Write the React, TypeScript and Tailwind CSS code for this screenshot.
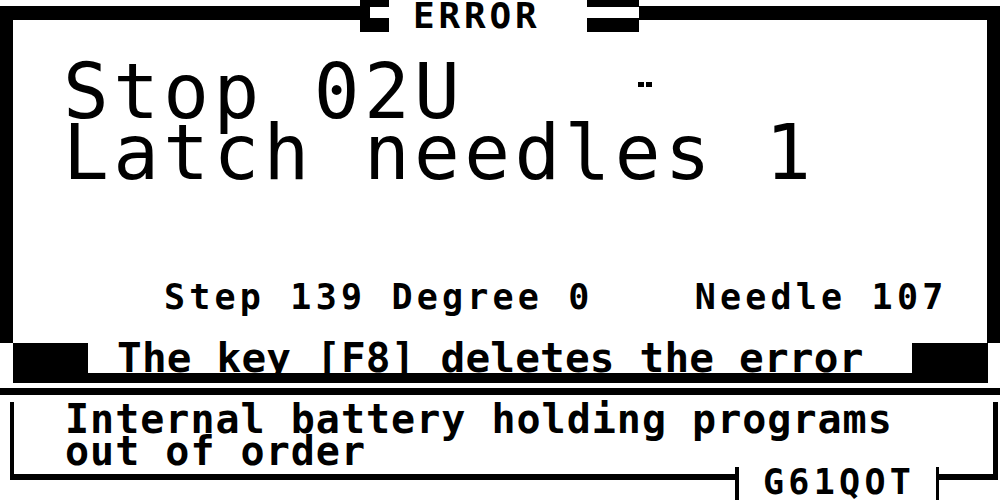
const mono = "font-['DejaVu_Sans_Mono',monospace]";

const Bars = ({ w }: { w: string }) => (
  <div className={`flex flex-col ${w} h-full`}>
    <div className="h-[7px] bg-black" />
    <div className="h-[11px] bg-white" />
    <div className="h-[14px] bg-black" />
  </div>
);

const App = () => {
  return (
    <div className={`relative w-[1000px] h-[500px] bg-white text-black overflow-hidden ${mono}`}>
      {/* title over the top border */}
      <div className="absolute top-0 left-[360px] flex flex-row h-[32px]">
        <div className="w-[10px] h-full bg-black" />
        <Bars w="w-[19px]" />
        <div className="w-[198px] h-full bg-white pl-[24px] font-bold text-[36px] leading-[32px] tracking-[3.8px]">
          ERROR
        </div>
        <Bars w="w-[52px]" />
      </div>

      {/* main error box */}
      <div className="mt-[6px] h-[337px] border-x-[13px] border-t-[14px] border-black">
        <div className="pt-[41px] pl-[50px]">
          <div className="flex flex-row items-start">
            <span className="text-[76px] leading-[61px] tracking-[4.4px] whitespace-pre">Stop 02U</span>
            <div className="flex flex-row gap-[2px] ml-[174px] mt-[21px]">
              <div className="w-[6px] h-[5px] bg-black" />
              <div className="w-[6px] h-[5px] bg-black" />
            </div>
          </div>
          <div className="text-[76px] leading-[61px] tracking-[4.4px] whitespace-pre">Latch needles 1</div>
        </div>
        <div className="mt-[99px] pl-[151px] font-bold text-[35px] leading-[30px] tracking-[4.2px] whitespace-pre">
          Step 139 Degree 0    Needle 107
        </div>
      </div>

      {/* message bar */}
      <div className="ml-[13px] mr-[12px] h-[40px] bg-black">
        <div className="ml-[75px] mr-[76px] h-[30px] bg-white pl-[29px] font-bold text-[41px] leading-[30px] tracking-[0.2px] whitespace-pre">
          The key [F8] deletes the error
        </div>
      </div>

      <div className="mt-[5px] h-[7px] bg-black" />

      {/* info box */}
      <div className="relative ml-[10px] mr-[2px] mt-[7px] h-[78px] border-l-[4px] border-r-[5px] border-b-[6px] border-black">
        <div className="pl-[51px] pt-[1px] font-bold text-[40px] leading-[32px] tracking-[1px] whitespace-pre">
          <div>Internal battery holding programs</div>
          <div>out of order</div>
        </div>
        <div className="absolute left-[721px] top-[65px] h-[33px] w-[204px] bg-white border-l-[4px] border-r-[3px] border-black pl-[24px] font-bold text-[35px] leading-[30px] tracking-[4.3px]">
          G61QOT
        </div>
      </div>
    </div>
  );
};

export default App;
